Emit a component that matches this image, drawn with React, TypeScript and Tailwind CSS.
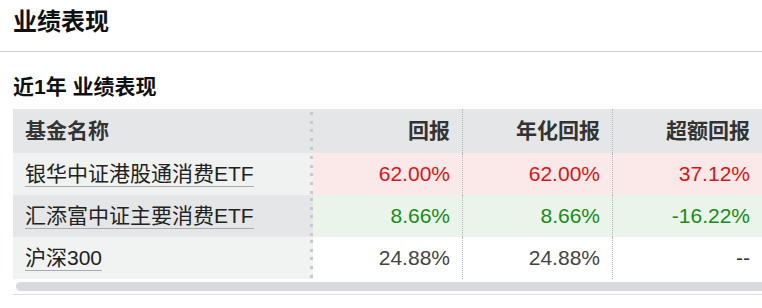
const font = "font-['Liberation_Sans','Noto_Sans_CJK_SC',sans-serif]";

type Row = {
  name: string;
  values: string[];
  nameBg: string;
  valueBg: string;
  color: string;
};

const rows: Row[] = [
  {
    name: "银华中证港股通消费ETF",
    values: ["62.00%", "62.00%", "37.12%"],
    nameBg: "bg-[#f0f1f1]",
    valueBg: "bg-[#fbe9e9]",
    color: "text-[#dc1414]",
  },
  {
    name: "汇添富中证主要消费ETF",
    values: ["8.66%", "8.66%", "-16.22%"],
    nameBg: "bg-[#e5e6e8]",
    valueBg: "bg-[#eaf4ea]",
    color: "text-[#168c16]",
  },
  {
    name: "沪深300",
    values: ["24.88%", "24.88%", "--"],
    nameBg: "bg-[#f1f2f2]",
    valueBg: "bg-white",
    color: "text-[#444]",
  },
];

const headers = ["回报", "年化回报", "超额回报"];

function Dots() {
  return (
    <div className="w-[3px] shrink-0 self-stretch bg-[repeating-linear-gradient(to_bottom,transparent_0_3px,#c8c9cc_3px_6px,transparent_6px_8.7px)]" />
  );
}

function ValueCell({ children, last, className }: { children: React.ReactNode; last?: boolean; className?: string }) {
  return (
    <div
      className={`flex items-center justify-end pr-3 ${last ? "w-[149px]" : "w-[150px] border-r border-dotted border-[#b5b6b8]"} ${className ?? ""}`}
    >
      {children}
    </div>
  );
}

export default function App() {
  return (
    <div className={`w-[762px] h-[308px] overflow-hidden bg-white ${font}`}>
      <div className="h-[52px] flex items-center pb-[7px] pl-[13px] border-b border-[#cccccc]">
        <h2 className="text-[24px] font-bold text-[#111] leading-none">业绩表现</h2>
      </div>
      <div className="h-[57px] flex items-center pt-[11px] pl-[13px]">
        <h3 className="text-[21px] font-bold text-[#111] leading-none">近1年 业绩表现</h3>
      </div>

      <div className="ml-[13px] w-[749px] text-[21px]">
        <div className="flex h-[44px] bg-[#e5e6e8] font-bold text-[#333]">
          <div className="w-[297px] flex items-center pl-3">基金名称</div>
          <Dots />
          {headers.map((h, i) => (
            <ValueCell key={h} last={i === headers.length - 1}>
              {h}
            </ValueCell>
          ))}
        </div>

        {rows.map((row) => (
          <div key={row.name} className="flex h-[42px]">
            <div className={`w-[297px] flex items-center pl-3 ${row.nameBg}`}>
              <span className="text-[#222] leading-[24px] border-b border-[#a9abae]">{row.name}</span>
            </div>
            <div className={`flex ${row.nameBg}`}>
              <Dots />
            </div>
            {row.values.map((v, i) => (
              <ValueCell
                key={i}
                last={i === row.values.length - 1}
                className={`${row.valueBg} ${v === "--" ? "text-[#333]" : row.color}`}
              >
                {v}
              </ValueCell>
            ))}
          </div>
        ))}

        <div className="mt-[3px] pl-[3px]">
          <div className="h-[9px] rounded-l-full bg-[#d9dadd]" />
        </div>
        <div className="mt-[3px] border-t border-[#dcdcdc]" />
      </div>
    </div>
  );
}
